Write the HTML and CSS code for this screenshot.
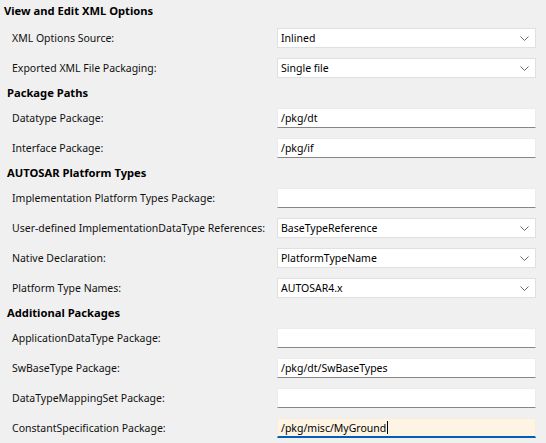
FILE: index.html
```html
<!DOCTYPE html>
<html>
<head>
<meta charset="utf-8">
<link rel="stylesheet" href="styles.css">
</head>
<body>
<div class="panel">
  <div class="heading first">View and Edit XML Options</div>
  <div class="row"><span class="label">XML Options Source:</span><div class="combo"><span>Inlined</span><svg class="chev" width="9" height="5" viewBox="0 0 9 5"><path d="M0.5 0.5 L4.5 4.5 L8.5 0.5" fill="none" stroke="#6a6a6a" stroke-width="1"/></svg></div></div>
  <div class="row"><span class="label">Exported XML File Packaging:</span><div class="combo"><span>Single file</span><svg class="chev" width="9" height="5" viewBox="0 0 9 5"><path d="M0.5 0.5 L4.5 4.5 L8.5 0.5" fill="none" stroke="#6a6a6a" stroke-width="1"/></svg></div></div>

  <div class="heading">Package Paths</div>
  <div class="row"><span class="label">Datatype Package:</span><div class="text"><span>/pkg/dt</span></div></div>
  <div class="row"><span class="label">Interface Package:</span><div class="text"><span>/pkg/if</span></div></div>

  <div class="heading">AUTOSAR Platform Types</div>
  <div class="row"><span class="label">Implementation Platform Types Package:</span><div class="text"><span></span></div></div>
  <div class="row"><span class="label">User-defined ImplementationDataType References:</span><div class="combo"><span>BaseTypeReference</span><svg class="chev" width="9" height="5" viewBox="0 0 9 5"><path d="M0.5 0.5 L4.5 4.5 L8.5 0.5" fill="none" stroke="#6a6a6a" stroke-width="1"/></svg></div></div>
  <div class="row"><span class="label">Native Declaration:</span><div class="combo"><span>PlatformTypeName</span><svg class="chev" width="9" height="5" viewBox="0 0 9 5"><path d="M0.5 0.5 L4.5 4.5 L8.5 0.5" fill="none" stroke="#6a6a6a" stroke-width="1"/></svg></div></div>
  <div class="row"><span class="label">Platform Type Names:</span><div class="combo"><span>AUTOSAR4.x</span><svg class="chev" width="9" height="5" viewBox="0 0 9 5"><path d="M0.5 0.5 L4.5 4.5 L8.5 0.5" fill="none" stroke="#6a6a6a" stroke-width="1"/></svg></div></div>

  <div class="heading">Additional Packages</div>
  <div class="row"><span class="label">ApplicationDataType Package:</span><div class="text"><span></span></div></div>
  <div class="row"><span class="label">SwBaseType Package:</span><div class="text"><span>/pkg/dt/SwBaseTypes</span></div></div>
  <div class="row"><span class="label">DataTypeMappingSet Package:</span><div class="text"><span></span></div></div>
  <div class="row"><span class="label">ConstantSpecification Package:</span><div class="text focused"><span>/pkg/misc/MyGround</span><i class="caret"></i></div></div>
</div>
</body>
</html>
```

FILE: styles.css
```css
html, body {
  margin: 0;
  padding: 0;
  background: #f0f0f0;
}
body {
  font-family: "Noto Sans", "Open Sans", sans-serif;
  font-size: 10.5px;
  color: #000;
}
.panel {
  width: 546px;
  padding-top: 3px;
}
.heading {
  height: 20px;
  line-height: 20px;
  font-size: 11.2px;
  font-weight: bold;
  padding-left: 7px;
}
.heading.first {
  padding-left: 4px;
  line-height: 16px;
  height: 16px;
  padding-bottom: 4px;
}
.row {
  height: 30px;
  display: flex;
  align-items: center;
}
.label {
  width: 265px;
  padding-left: 12px;
  white-space: nowrap;
  color: #111;
}
.combo, .text {
  box-sizing: border-box;
  width: 259px;
  height: 20px;
  display: flex;
  align-items: center;
  padding-left: 3px;
  background: #fff;
}
.combo {
  border: 1px solid #e0e0e0;
  justify-content: space-between;
  padding-right: 3px;
}
.combo .chev {
  margin-right: 3px;
}
.text {
  border: 1px solid #ececec;
  border-bottom-color: #868686;
}
.text.focused {
  background: #fdf4e3;
  border-color: #f4ede0;
  border-bottom: 2px solid #005fb8;
}
.caret {
  display: inline-block;
  width: 1px;
  height: 13px;
  background: #000;
  margin-left: 1px;
}
```
